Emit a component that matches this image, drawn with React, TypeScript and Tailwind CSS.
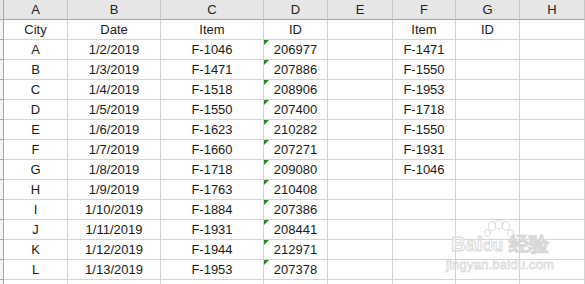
import React from "react";

const data = [
  ["A", "1/2/2019", "F-1046", "206977", "F-1471"],
  ["B", "1/3/2019", "F-1471", "207886", "F-1550"],
  ["C", "1/4/2019", "F-1518", "208906", "F-1953"],
  ["D", "1/5/2019", "F-1550", "207400", "F-1718"],
  ["E", "1/6/2019", "F-1623", "210282", "F-1550"],
  ["F", "1/7/2019", "F-1660", "207271", "F-1931"],
  ["G", "1/8/2019", "F-1718", "209080", "F-1046"],
  ["H", "1/9/2019", "F-1763", "210408", ""],
  ["I", "1/10/2019", "F-1884", "207386", ""],
  ["J", "1/11/2019", "F-1931", "208441", ""],
  ["K", "1/12/2019", "F-1944", "212971", ""],
  ["L", "1/13/2019", "F-1953", "207378", ""],
];

const cell =
  "h-[20px] border-r border-b border-[#d4d4d4] flex items-center justify-center text-[13px] text-[#1a1a1a] overflow-hidden";
const rowHead = "h-[20px] border-r border-b border-[#a8a8a8] bg-[#f2f2f2]";

function Cell({ children, flag }: { children?: React.ReactNode; flag?: boolean }) {
  return (
    <div className={cell + " relative"}>
      {flag && (
        <span className="absolute left-0 top-0 w-0 h-0 border-t-[5px] border-t-[#1e8a1e] border-r-[5px] border-r-transparent" />
      )}
      {children}
    </div>
  );
}

export default function App() {
  const headers = ["A", "B", "C", "D", "E", "F", "G", "H"];
  const rows: string[][] = [["City", "Date", "Item", "ID", "", "Item", "ID", ""]];
  data.forEach((d) => rows.push([d[0], d[1], d[2], d[3], "", d[4], "", ""]));
  rows.push(["", "", "", "", "", "", "", ""]);
  return (
    <div
      className="relative w-[585px] h-[284px] overflow-hidden bg-white"
      style={{ fontFamily: '"Liberation Sans", Arial, sans-serif' }}
    >
      <div className="grid grid-cols-[4px_64px_93px_103px_64px_65px_63px_64px_65px]">
        <div className="h-[20px] border-r border-b border-[#a8a8a8] bg-[#e6e6e6]" />
        {headers.map((h) => (
          <div
            key={h}
            className="h-[20px] border-r border-[#c6c6c6] border-b border-b-[#a8a8a8] bg-[#e6e6e6] flex items-center justify-center text-[13px] text-[#222]"
          >
            {h}
          </div>
        ))}
        {rows.map((r, i) => (
          <React.Fragment key={i}>
            <div className={rowHead} />
            {r.map((v, j) => (
              <Cell key={j} flag={j === 3 && i >= 1 && i <= 12}>
                {v}
              </Cell>
            ))}
          </React.Fragment>
        ))}
      </div>
      <svg
        className="absolute left-[483px] top-[220px] pointer-events-none"
        width="32"
        height="24"
        viewBox="0 0 32 24"
      >
        <g fill="white" fillOpacity="0.6" stroke="#dadada" strokeWidth="1">
          <ellipse cx="9" cy="6" rx="3.5" ry="4.5" />
          <ellipse cx="16" cy="4.5" rx="3.5" ry="4.5" />
          <ellipse cx="23" cy="6" rx="3.5" ry="4.5" />
          <ellipse cx="4.5" cy="13" rx="3" ry="3.5" />
          <ellipse cx="27.5" cy="13" rx="3" ry="3.5" />
        </g>
      </svg>
      <div className="absolute left-[447px] top-[234px] w-[106px] flex flex-col items-center pointer-events-none select-none whitespace-nowrap">
        <div className="text-[20px] font-bold leading-none text-white/60 [-webkit-text-stroke:1px_#d8d8d8]">
          Bai<span className="text-[17px]">du</span>&nbsp;经验
        </div>
        <div className="mt-[4px] text-[13px] leading-none text-white/60 [-webkit-text-stroke:0.8px_#dcdcdc] tracking-[0.2px]">
          jingyan.baidu.com
        </div>
      </div>
    </div>
  );
}
